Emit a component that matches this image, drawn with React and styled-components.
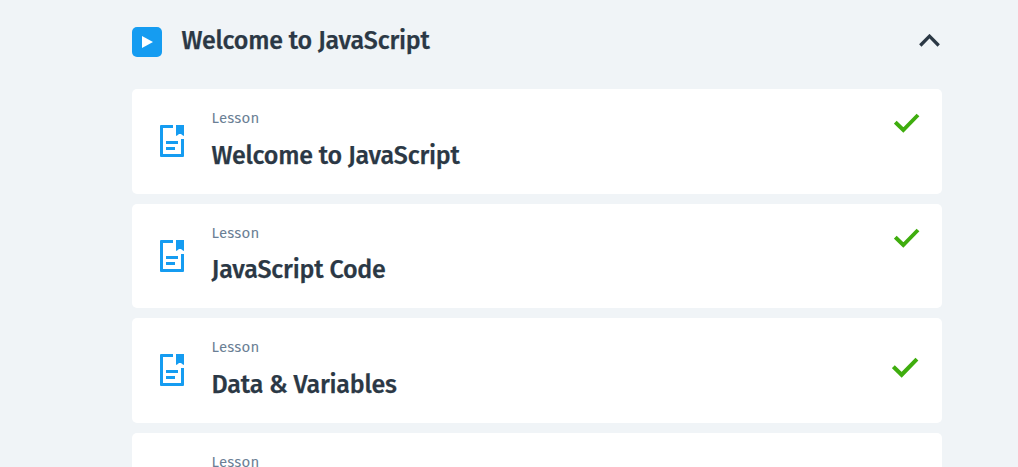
import React from "react";
import styled, { createGlobalStyle } from "styled-components";

const GlobalStyle = createGlobalStyle`
  * { box-sizing: border-box; }
  body {
    margin: 0;
    background: #f0f4f7;
    overflow: hidden;
    font-family: "Fira Sans", "Noto Sans", sans-serif;
  }
`;

const Page = styled.main`
  height: 467px;
  overflow: hidden;
  padding-left: 132px;
`;

const Section = styled.section`
  width: 810px;
`;

const SectionHeader = styled.header`
  display: flex;
  align-items: center;
  height: 89px;
  padding: 0 2px 8px 0;
`;

const PlayBadge = styled.span`
  display: flex;
  width: 30px;
  height: 30px;
  margin: 2px 19.6px 0 0;
  border-radius: 5px;
  background: #159cf1;
`;

const Title = styled.h2`
  margin: 0;
  color: #2b3845;
  font-size: 25px;
  line-height: 32px;
  font-weight: 500;
  letter-spacing: -0.22px;
  -webkit-text-stroke: 0.25px #2b3845;
  white-space: nowrap;
`;

const HeaderTitle = styled(Title)`
  margin-top: 1px;
`;

const Toggle = styled.button`
  display: flex;
  margin: 0 0 0 auto;
  padding: 0;
  border: 0;
  background: none;
`;

const LessonList = styled.div`
  display: flex;
  flex-direction: column;
  gap: 10px;
`;

const Card = styled.article`
  display: flex;
  flex-shrink: 0;
  height: 104.6px;
  padding: 19px 22px 0 28px;
  border-radius: 5px;
  background: #fff;
`;

const LessonMark = styled.span`
  display: flex;
  width: 51.6px;
  padding-top: 17px;
`;

const LessonText = styled.div`
  flex: 1;
`;

const Kind = styled.div`
  color: #6b7f95;
  font-size: 15px;
  line-height: 20px;
  letter-spacing: 0.2px;
  margin-bottom: 11.6px;
`;

const Status = styled.span`
  display: flex;
  align-self: flex-start;
  margin-top: ${(p) => p.$top}px;
  margin-right: ${(p) => p.$right}px;
`;

function LessonIcon() {
  return (
    <svg width="24" height="32" viewBox="0 0 24 32" fill="#159cf1">
      <path d="M1 0H13V3H3V29H21V14H24V31Q24 32 23 32H1Q0 32 0 31V1Q0 0 1 0Z" />
      <path d="M16 0H24V11L22.5 10.3L21 9H19L17.5 10.3L16 11Z" />
      <path d="M6 16H18V19H6ZM6 22H15V25H6Z" />
    </svg>
  );
}

function Check({ large }) {
  return (
    <svg width={large ? 27 : 26} height={large ? 21 : 20} viewBox="0 0 26 20" fill="none">
      <path d="M1.3 9.2L9.3 17L24 2" stroke="#3fad0e" strokeWidth="3.9" />
    </svg>
  );
}

const lessons = [
  { id: 1, title: "Welcome to JavaScript", top: 5.4, right: 0 },
  { id: 2, title: "JavaScript Code", top: 5.8, right: 0 },
  { id: 3, title: "Data & Variables", top: 19.5, right: 1, large: true },
  { id: 4 },
];

export default function App() {
  return (
    <>
      <GlobalStyle />
      <Page>
        <Section>
          <SectionHeader>
            <PlayBadge>
              <svg width="30" height="30" viewBox="0 0 30 30">
                <path d="M10 9L21 15L10 21Z" fill="#fff" />
              </svg>
            </PlayBadge>
            <HeaderTitle>Welcome to JavaScript</HeaderTitle>
            <Toggle aria-label="Collapse section">
              <svg width="21" height="13" viewBox="0 0 21 13" fill="none">
                <path d="M1.3 11.5L10.5 2.2L19.7 11.5" stroke="#2b3845" strokeWidth="3.3" />
              </svg>
            </Toggle>
          </SectionHeader>
          <LessonList>
            {lessons.map((l) => (
              <Card key={l.id}>
                <LessonMark>
                  <LessonIcon />
                </LessonMark>
                <LessonText>
                  <Kind>Lesson</Kind>
                  {l.title && <Title>{l.title}</Title>}
                </LessonText>
                {l.title && (
                  <Status $top={l.top} $right={l.right}>
                    <Check large={l.large} />
                  </Status>
                )}
              </Card>
            ))}
          </LessonList>
        </Section>
      </Page>
    </>
  );
}
